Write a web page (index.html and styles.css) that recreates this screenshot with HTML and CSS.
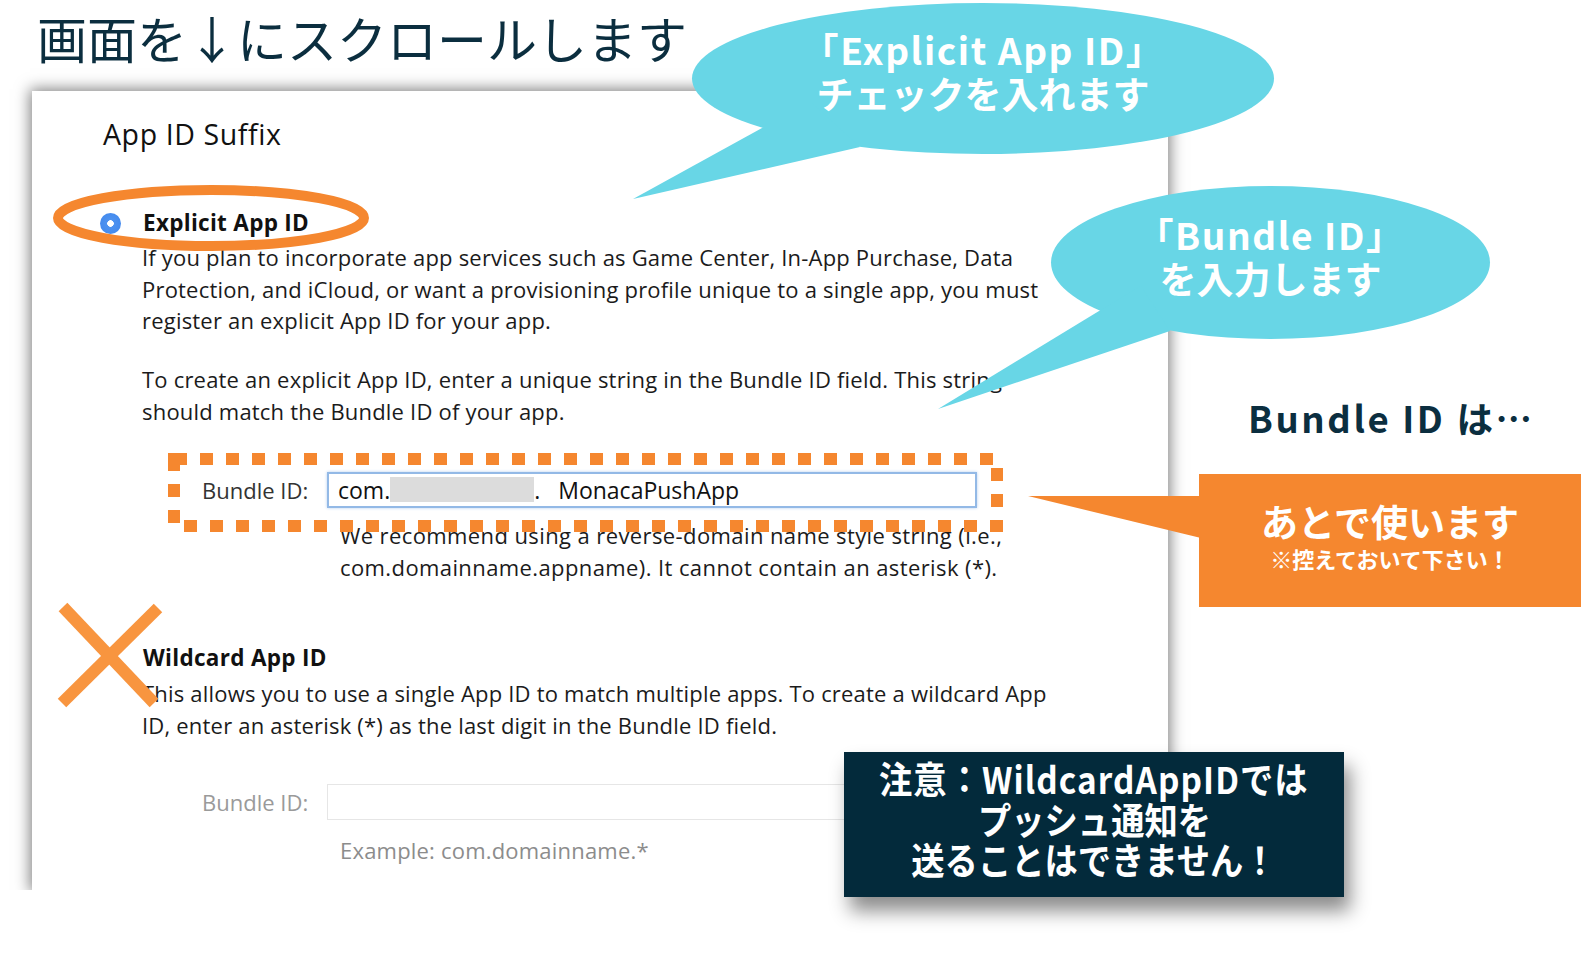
FILE: index.html
```html
<!DOCTYPE html>
<html lang="ja">
<head>
<meta charset="utf-8">
<title>App ID Suffix</title>
<link rel="stylesheet" href="styles.css">
</head>
<body>
<div class="slide">
  <h1 class="title">画面を↓にスクロールします</h1>

  <section class="panel">
    <h2 class="suffix">App ID Suffix</h2>

    <div class="option explicit">
      <div class="option-head"><span class="radio"></span><span class="option-name">Explicit App ID</span></div>
      <p class="desc">If you plan to incorporate app services such as Game Center, In-App Purchase, Data<br>Protection, and iCloud, or want a provisioning profile unique to a single app, you must<br>register an explicit App ID for your app.</p>
      <p class="desc second">To create an explicit App ID, enter a unique string in the Bundle ID field. This string<br>should match the Bundle ID of your app.</p>
      <div class="field">
        <span class="field-label">Bundle ID:</span>
        <div class="field-input active"><span>com.</span><span class="blur"></span><span class="dot">.</span><span>MonacaPushApp</span></div>
      </div>
      <p class="hint">We recommend using a reverse-domain name style string (i.e.,<br>com.domainname.appname). It cannot contain an asterisk (*).</p>
    </div>

    <div class="option wildcard">
      <div class="option-head"><span class="radio off"></span><span class="option-name">Wildcard App ID</span></div>
      <p class="desc">This allows you to use a single App ID to match multiple apps. To create a wildcard App<br>ID, enter an asterisk (*) as the last digit in the Bundle ID field.</p>
      <div class="field muted">
        <span class="field-label">Bundle ID:</span>
        <div class="field-input"></div>
      </div>
      <p class="hint muted">Example: com.domainname.*</p>
    </div>
  </section>

  <svg class="marks" width="1581" height="959" viewBox="0 0 1581 959">
    <ellipse cx="211" cy="218" rx="153" ry="28" fill="none" stroke="#f5872f" stroke-width="10"/>
    <rect x="174" y="459" width="823" height="67" fill="none" stroke="#f5872f" stroke-width="12" stroke-dasharray="13 13"/>
    <line x1="63" y1="607" x2="154" y2="703" stroke="#f8953f" stroke-width="12"/>
    <line x1="158" y1="608" x2="62" y2="703" stroke="#f8953f" stroke-width="12"/>
  </svg>

  <div class="bubble bubble-explicit">
    <svg class="bubble-shape" width="582" height="151" viewBox="0 0 582 151">
      <ellipse cx="291" cy="75.5" rx="291" ry="75.5" fill="#68d6e6"/>
      <polygon points="-59,196 70,125 120,100 168,144" fill="#68d6e6"/>
    </svg>
    <span class="latin">「Explicit App ID」</span>
    <span>チェックを入れます</span>
  </div>

  <div class="bubble bubble-bundle">
    <svg class="bubble-shape" width="439" height="153" viewBox="0 0 439 153">
      <ellipse cx="219.5" cy="76.5" rx="219.5" ry="76.5" fill="#68d6e6"/>
      <polygon points="-113,223 48,125 90,100 119,145" fill="#68d6e6"/>
    </svg>
    <span class="latin">「Bundle ID」</span>
    <span>を入力します</span>
  </div>

  <p class="note-title">Bundle ID は…</p>

  <div class="memo">
    <svg class="memo-tail" width="175" height="70" viewBox="0 0 175 70">
      <polygon points="0,22 173,22 173,64" fill="#f5872f"/>
    </svg>
    <span class="memo-main">あとで使います</span>
    <span class="memo-sub">※控えておいて下さい！</span>
  </div>

  <div class="warning">
    <span class="warning-first">注意：WildcardAppIDでは</span>
    <span>プッシュ通知を</span>
    <span>送ることはできません！</span>
  </div>
</div>
</body>
</html>
```

FILE: styles.css
```css
body {
  margin: 0;
  background: #ffffff;
}

.slide {
  position: relative;
  width: 1581px;
  height: 959px;
  overflow: hidden;
  background: #ffffff;
  font-family: "Open Sans", "Noto Sans CJK JP", sans-serif;
}

.title {
  margin: 0;
  box-sizing: border-box;
  height: 91px;
  padding: 5px 0 0 37px;
  font: 400 50px/64px "Noto Sans CJK JP", sans-serif;
  color: #0b2e3f;
  white-space: nowrap;
}

.panel {
  margin-left: 32px;
  width: 1136px;
  height: 799px;
  box-sizing: border-box;
  padding: 26px 0 0 71px;
  background: #ffffff;
  box-shadow: 0 0 14px 2px rgba(0, 0, 0, 0.5);
  clip-path: inset(-30px -30px 0 -30px);
  color: #1b1b1b;
}

.suffix {
  margin: 0;
  font: 400 28.5px/34px "Open Sans", sans-serif;
  letter-spacing: 0.6px;
  color: #111;
}

.option {
  padding-left: 39px;
}

.explicit {
  margin-top: 57px;
}

.wildcard {
  margin-top: 60px;
}

.option-head {
  display: flex;
  align-items: center;
  height: 30px;
  margin-left: -42px;
  gap: 22px;
}

.radio {
  flex: none;
  width: 21px;
  height: 21px;
  border-radius: 50%;
  background: radial-gradient(circle, #ffffff 0 3px, #4d92f0 3.6px, #3f86ec 100%);
}

.radio.off {
  visibility: hidden;
}

.option-name {
  font: 700 22.5px/30px "Open Sans", sans-serif;
  letter-spacing: 0.3px;
  color: #111;
}

.desc {
  margin: 4px 0 0;
  font: 400 22px/31.5px "Open Sans", sans-serif;
  letter-spacing: 0.2px;
  white-space: nowrap;
}

.wildcard .desc {
  margin-top: 5px;
}

.desc.second {
  margin-top: 27.5px;
}

.field {
  display: flex;
  align-items: center;
  margin: 44.75px 0 0 60px;
}

.wildcard .field {
  margin-top: 43px;
}

.field-label {
  width: 125px;
  font: 400 22px/30px "Open Sans", sans-serif;
  color: #333;
}

.field-input {
  width: 650px;
  height: 36px;
  box-sizing: border-box;
  display: flex;
  align-items: center;
  padding-left: 9px;
  border: 1px solid #e6e6e6;
  font: 400 23px/30px "Open Sans", sans-serif;
  color: #111;
  white-space: pre;
}

.field-input.active {
  border: 2px solid #93b9e6;
  box-shadow: 0 0 3px #b5d0f0;
}

.blur {
  display: inline-block;
  width: 144px;
  height: 25px;
  background: #dcdcdc;
}

.dot {
  width: 24px;
}

.hint {
  margin: 12.25px 0 0 198px;
  font: 400 22px/31.5px "Open Sans", sans-serif;
  letter-spacing: 0.4px;
  white-space: nowrap;
}

.field.muted .field-label {
  color: #9a9a9a;
}

.hint.muted {
  margin-top: 15px;
  letter-spacing: 0.2px;
  color: #8c8c8c;
}

.marks {
  position: absolute;
  left: 0;
  top: 0;
  pointer-events: none;
}

.bubble {
  position: absolute;
  z-index: 3;
  display: flex;
  flex-direction: column;
  align-items: center;
  justify-content: center;
  box-sizing: border-box;
  color: #ffffff;
  font: 700 37px/44px "Noto Sans CJK JP", sans-serif;
  white-space: nowrap;
}

.bubble .latin {
  letter-spacing: 1.6px;
}

.bubble-shape {
  position: absolute;
  left: 0;
  top: 0;
  overflow: visible;
  z-index: -1;
}

.bubble-explicit {
  left: 692px;
  top: 3px;
  width: 582px;
  height: 151px;
  padding-bottom: 16px;
}

.bubble-bundle {
  left: 1051px;
  top: 186px;
  width: 439px;
  height: 153px;
  padding-bottom: 14px;
}

.note-title {
  position: absolute;
  left: 1248px;
  top: 396px;
  margin: 0;
  font: 700 36.5px/44px "Noto Sans CJK JP", sans-serif;
  letter-spacing: 2.6px;
  color: #0b2e3f;
  white-space: nowrap;
}

.memo {
  position: absolute;
  z-index: 3;
  left: 1199px;
  top: 474px;
  width: 382px;
  height: 133px;
  box-sizing: border-box;
  padding-top: 25px;
  display: flex;
  flex-direction: column;
  align-items: center;
  background: #f5872f;
  color: #ffffff;
  font-family: "Noto Sans CJK JP", sans-serif;
  font-weight: 700;
  white-space: nowrap;
}

.memo-tail {
  position: absolute;
  left: -171px;
  top: 0;
}

.memo-main {
  font-size: 37px;
  line-height: 44px;
}

.memo-sub {
  font-size: 22px;
  line-height: 30px;
}

.warning {
  position: absolute;
  z-index: 3;
  left: 844px;
  top: 752px;
  width: 500px;
  height: 145px;
  box-sizing: border-box;
  padding-top: 6px;
  display: flex;
  flex-direction: column;
  align-items: center;
  background: #032a3b;
  box-shadow: 6px 14px 18px rgba(0, 0, 0, 0.45);
  color: #ffffff;
  font: 700 37px/40.5px "Noto Sans CJK JP", sans-serif;
  white-space: nowrap;
}

.warning span {
  display: block;
  transform: scaleX(0.9);
}

.warning .warning-first {
  letter-spacing: 1.2px;
}
```
